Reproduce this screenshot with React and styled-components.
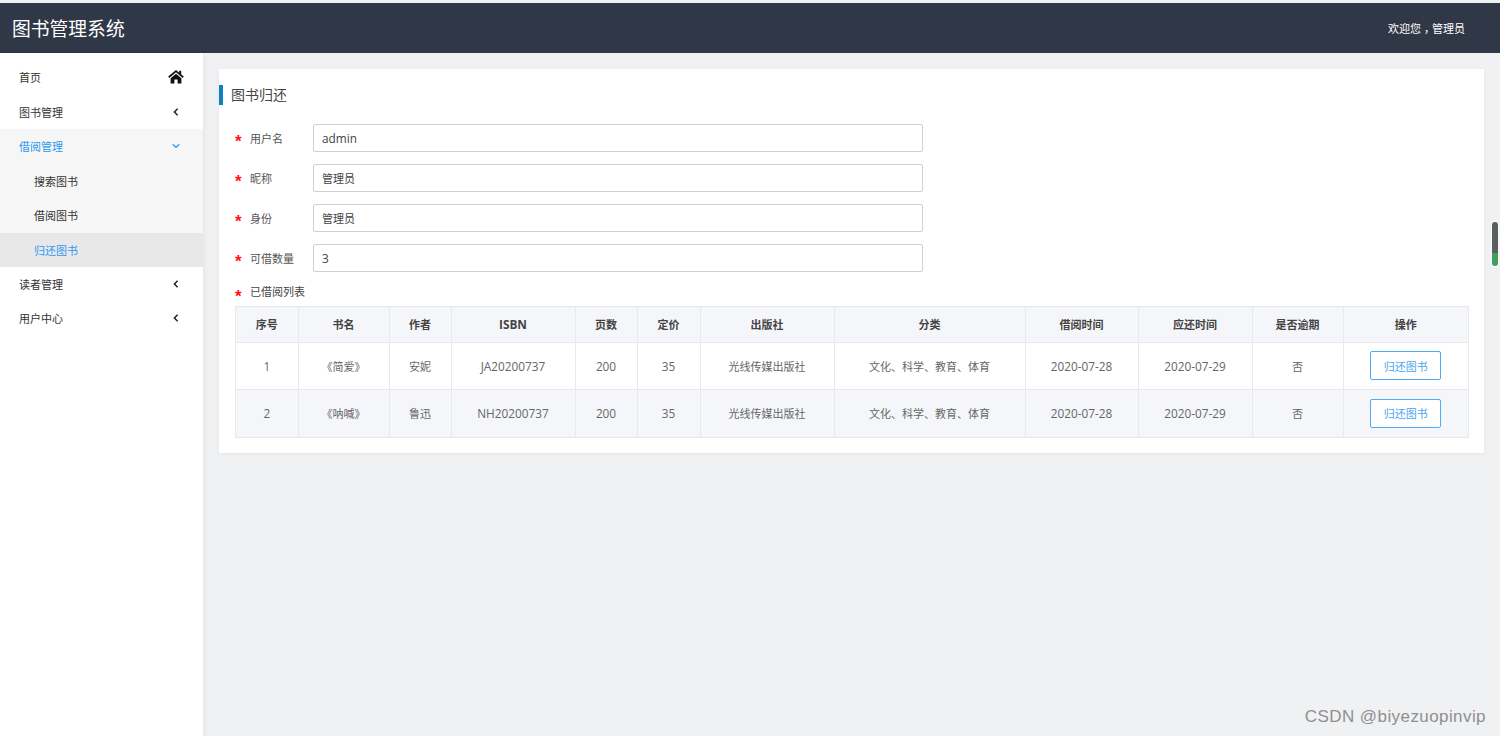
import React from "react";
import styled, { createGlobalStyle } from "styled-components";

const GlobalStyle = createGlobalStyle`
  html, body {
    margin: 0;
    padding: 0;
    height: 100%;
    overflow: hidden;
  }
  body {
    font-family: "Open Sans", "Noto Sans CJK SC", sans-serif;
    font-size: 11px;
    color: #606266;
    background: #f0f1f3;
  }
  * {
    box-sizing: border-box;
  }
`;

const Page = styled.div`
  position: relative;
  width: 1500px;
  height: 736px;
  padding-top: 3px;
  display: flex;
  flex-direction: column;
  overflow: hidden;
  background: #f0f1f3;
`;

const Header = styled.header`
  height: 50px;
  flex: none;
  display: flex;
  align-items: center;
  justify-content: space-between;
  padding: 0 35px 0 12px;
  background: #303848;
  color: #fff;
`;

const Logo = styled.div`
  font-size: 18.8px;
  line-height: 50px;
  margin-top: 1px;
`;

const Welcome = styled.div`
  font-size: 11px;
`;

const Comma = styled.span`
  display: inline-block;
  font-family: "Noto Sans CJK TC", sans-serif;
  transform: translateY(3px);
`;

const Body = styled.div`
  flex: 1;
  display: flex;
  min-height: 0;
`;

const Sidebar = styled.nav`
  width: 204px;
  flex: none;
  padding-top: 7.6px;
  background: #fff;
  border-right: 1px solid #e6e8ec;
  box-shadow: 0 2px 6px rgba(0, 0, 0, 0.05);
`;

const MenuItem = styled.div`
  height: 34.45px;
  display: flex;
  align-items: center;
  justify-content: space-between;
  padding: 0 19px 1px ${(p) => (p.$sub ? "34px" : "19px")};
  font-size: 11px;
  color: ${(p) => (p.$active ? "#2d9af0" : "#333")};
  background: ${(p) => (p.$selected ? "#e8e8e8" : p.$open ? "#f6f6f6" : "#fff")};
`;

const IconSlot = styled.span`
  width: 17px;
  display: flex;
  justify-content: center;
`;

const Main = styled.main`
  flex: 1;
  min-width: 0;
  padding: 16px 16px 0 15px;
`;

const Card = styled.section`
  height: 384px;
  padding: 16px 16px 0 0;
  background: #fff;
  box-shadow: 0 1px 4px rgba(0, 0, 0, 0.06);
`;

const Title = styled.h2`
  margin: 0 0 19px 0;
  height: 20px;
  padding-left: 8px;
  border-left: 4px solid #0c83bd;
  font-size: 14px;
  font-weight: 400;
  line-height: 20px;
  color: #444;
`;

const FormRow = styled.div`
  display: flex;
  align-items: center;
  height: 28px;
  margin-bottom: 12px;
  padding-left: 16px;
`;

const Star = styled.span`
  width: 15px;
  flex: none;
  color: #ff1020;
  font-size: 17px;
  font-weight: 700;
  font-family: "Liberation Sans", sans-serif;
  line-height: 1;
  margin-top: ${(p) => (p.$low ? "10px" : "6px")};
`;

const Label = styled.label`
  width: 63px;
  flex: none;
  color: #555;
  font-size: 11px;
`;

const Input = styled.div`
  width: 610px;
  height: 28px;
  padding: 0 8px;
  display: flex;
  align-items: center;
  border: 1px solid #d0d0d0;
  border-radius: 2px;
  color: #444;
  font-size: ${(p) => (p.$latin ? "11.8px" : "11px")};
`;

const ListLabel = styled.div`
  display: flex;
  align-items: center;
  height: 14px;
  margin-top: 12px;
  margin-bottom: 8px;
  padding-left: 16px;
  color: #444;
`;

const TableWrap = styled.div`
  margin-left: 16px;
`;

const Table = styled.table`
  width: 1233px;
  table-layout: fixed;
  border-collapse: collapse;
  text-align: center;
  font-size: 11px;
  color: #666;
`;

const Col = styled.col`
  width: ${(p) => p.$width}px;
`;

const Th = styled.th`
  height: 35.5px;
  padding: 0;
  background: #f5f6fa;
  border: 1px solid #e8e9ed;
  color: #444;
  font-size: ${(p) => (p.$latin ? "11.8px" : "11px")};
  font-weight: 700;
`;

const Row = styled.tr`
  background: ${(p) => (p.$alt ? "#f5f6fa" : "#fff")};
`;

const Td = styled.td`
  height: 47.5px;
  padding: 0;
  border: 1px solid #e8e9ed;
  font-size: ${(p) => (p.$latin ? "11.8px" : "11px")};
`;

const ReturnButton = styled.button`
  width: 71px;
  height: 29px;
  padding: 0;
  background: #fff;
  border: 1px solid #4dabf7;
  border-radius: 2px;
  color: #4aa5ee;
  font-family: inherit;
  font-size: 11px;
`;

const Scrollbar = styled.div`
  position: absolute;
  left: 1492px;
  top: 222px;
  width: 6px;
  height: 44px;
  border-radius: 3px;
  background: linear-gradient(#5b5f5e 0 70%, #3f9d5e 70% 100%);
  box-shadow: 0 0 1px 1px rgba(255, 255, 255, 0.7);
`;

const Watermark = styled.div`
  position: absolute;
  right: 14px;
  bottom: 9px;
  font-family: "Liberation Sans", sans-serif;
  font-size: 17px;
  letter-spacing: 0.42px;
  color: #8f8f8f;
`;

const HomeIcon = () => (
  <svg width="16" height="14" viewBox="0 0 16 14" fill="#111">
    <path d="M8 0 L0.2 6.6 L1.3 7.9 L8 2.3 L14.7 7.9 L15.8 6.6 L13.2 4.4 V0.8 H11.2 V2.7 Z" />
    <path d="M8 3.7 L2.6 8.2 V13.6 H6.4 V9.6 H9.6 V13.6 H13.4 V8.2 Z" />
  </svg>
);

const ChevronLeft = () => (
  <svg width="6" height="8" viewBox="0 0 6 8" fill="none" stroke="#222" strokeWidth="1.5">
    <path d="M4.6 0.8 L1.4 4 L4.6 7.2" />
  </svg>
);

const ChevronDown = () => (
  <svg width="8" height="6" viewBox="0 0 8 6" fill="none" stroke="#2d9af0" strokeWidth="1.3">
    <path d="M0.8 1.2 L4 4.4 L7.2 1.2" />
  </svg>
);

const fields = [
  ["用户名", "admin", true],
  ["昵称", "管理员", false],
  ["身份", "管理员", false],
  ["可借数量", "3", true],
];

const columns = [
  ["序号", 62.5],
  ["书名", 91],
  ["作者", 62],
  ["ISBN", 124],
  ["页数", 62],
  ["定价", 63],
  ["出版社", 134],
  ["分类", 191],
  ["借阅时间", 113],
  ["应还时间", 114],
  ["是否逾期", 91],
  ["操作", 125.5],
];

const books = [
  { id: "1", name: "《简爱》", author: "安妮", isbn: "JA20200737" },
  { id: "2", name: "《呐喊》", author: "鲁迅", isbn: "NH20200737" },
];

export default function App() {
  return (
    <Page>
      <GlobalStyle />
      <Header>
        <Logo>图书管理系统</Logo>
        <Welcome>欢迎您<Comma>，</Comma>管理员</Welcome>
      </Header>
      <Body>
        <Sidebar>
          <MenuItem>
            首页
            <IconSlot><HomeIcon /></IconSlot>
          </MenuItem>
          <MenuItem>
            图书管理
            <IconSlot><ChevronLeft /></IconSlot>
          </MenuItem>
          <MenuItem $open $active>
            借阅管理
            <IconSlot><ChevronDown /></IconSlot>
          </MenuItem>
          <MenuItem $open $sub>搜索图书</MenuItem>
          <MenuItem $open $sub>借阅图书</MenuItem>
          <MenuItem $selected $active $sub>归还图书</MenuItem>
          <MenuItem>
            读者管理
            <IconSlot><ChevronLeft /></IconSlot>
          </MenuItem>
          <MenuItem>
            用户中心
            <IconSlot><ChevronLeft /></IconSlot>
          </MenuItem>
        </Sidebar>
        <Main>
          <Card>
            <Title>图书归还</Title>
            {fields.map(([label, value, latin]) => (
              <FormRow key={label}>
                <Star>*</Star>
                <Label>{label}</Label>
                <Input $latin={latin}>{value}</Input>
              </FormRow>
            ))}
            <ListLabel>
              <Star $low>*</Star>
              已借阅列表
            </ListLabel>
            <TableWrap>
              <Table>
                <colgroup>
                  {columns.map(([name, width]) => (
                    <Col key={name} $width={width} />
                  ))}
                </colgroup>
                <thead>
                  <tr>
                    {columns.map(([name]) => (
                      <Th key={name} $latin={name === "ISBN"}>{name}</Th>
                    ))}
                  </tr>
                </thead>
                <tbody>
                  {books.map((book, i) => (
                    <Row key={book.id} $alt={i === 1}>
                      <Td $latin>{book.id}</Td>
                      <Td>{book.name}</Td>
                      <Td>{book.author}</Td>
                      <Td $latin>{book.isbn}</Td>
                      <Td $latin>200</Td>
                      <Td $latin>35</Td>
                      <Td>光线传媒出版社</Td>
                      <Td>文化、科学、教育、体育</Td>
                      <Td $latin>2020-07-28</Td>
                      <Td $latin>2020-07-29</Td>
                      <Td>否</Td>
                      <Td>
                        <ReturnButton>归还图书</ReturnButton>
                      </Td>
                    </Row>
                  ))}
                </tbody>
              </Table>
            </TableWrap>
          </Card>
        </Main>
      </Body>
      <Scrollbar />
      <Watermark>CSDN @biyezuopinvip</Watermark>
    </Page>
  );
}
